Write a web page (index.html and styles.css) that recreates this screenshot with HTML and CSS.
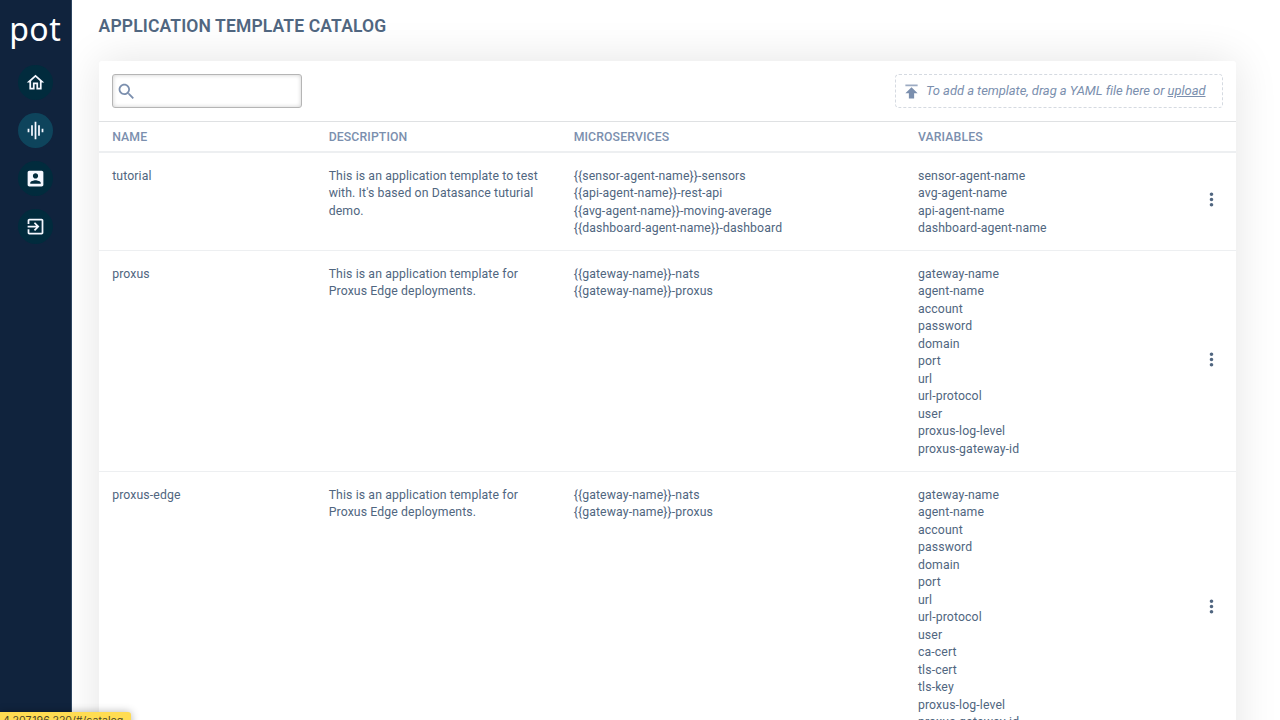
FILE: index.html
```html
<!DOCTYPE html>
<html lang="en">
<head>
<meta charset="utf-8">
<title>Application Template Catalog</title>
<link rel="stylesheet" href="styles.css">
</head>
<body>
<div class="app">
  <nav class="sidebar">
    <div class="logo">pot</div>
    <a class="nav-item"><svg viewBox="0 0 24 24"><path d="M12 5.69l5 4.5V18h-2v-6H9v6H7v-7.81l5-4.5M12 3L2 12h3v8h6v-6h2v6h6v-8h3L12 3z"/></svg></a>
    <a class="nav-item active"><svg viewBox="0 0 24 24"><path d="M7 18h2V6H7v12zm4 4h2V2h-2v20zm-8-8h2v-4H3v4zm12 4h2V6h-2v12zm4-8v4h2v-4h-2z"/></svg></a>
    <a class="nav-item"><svg viewBox="0 0 24 24"><path d="M3 5v14c0 1.1.89 2 2 2h14c1.1 0 2-.9 2-2V5c0-1.100-.9-2-2-2H5c-1.110 0-2 .9-2 2zm12 4c0 1.660-1.340 3-3 3s-3-1.340-3-3 1.340-3 3-3 3 1.340 3 3zm-9 8c0-2 4-3.100 6-3.100s6 1.100 6 3.100v1H6v-1z"/></svg></a>
    <a class="nav-item"><svg viewBox="0 0 24 24"><path d="M10.090 15.590L11.500 17l5-5-5-5-1.410 1.410L12.670 11H3v2h9.670l-2.580 2.590zM19 3H5c-1.110 0-2 .9-2 2v4h2V5h14v14H5v-4H3v4c0 1.100.89 2 2 2h14c1.100 0 2-.9 2-2V5c0-1.100-.9-2-2-2z"/></svg></a>
  </nav>
  <main class="content">
    <h1 class="title">APPLICATION TEMPLATE CATALOG</h1>
    <section class="card">
      <div class="toolbar">
        <label class="search"><svg viewBox="0 0 24 24"><path d="M15.500 14h-.79l-.28-.27C15.410 12.590 16 11.110 16 9.500 16 5.910 13.090 3 9.500 3S3 5.910 3 9.500 5.910 16 9.500 16c1.610 0 3.090-.59 4.230-1.570l.27.28v.79l5 4.990L20.490 19l-4.990-5zm-6 0C7.010 14 5 11.990 5 9.500S7.010 5 9.500 5 14 7.010 14 9.500 11.990 14 9.500 14z"/></svg></label>
        <div class="dropzone"><svg viewBox="0 0 24 24"><path opacity=".75" d="M5 4h14v2H5z"/><path d="M5 14h4v6h6v-6h4l-7-7z"/></svg><span>To add a template, drag a YAML file here or <u>upload</u></span></div>
      </div>
      <div class="row head"><div>NAME</div><div>DESCRIPTION</div><div>MICROSERVICES</div><div>VARIABLES</div></div>
      <div class="row">
        <div>tutorial</div>
        <div>This is an application template to test<br>with. It's based on Datasance tuturial<br>demo.</div>
        <div>{{sensor-agent-name}}-sensors<br>{{api-agent-name}}-rest-api<br>{{avg-agent-name}}-moving-average<br>{{dashboard-agent-name}}-dashboard</div>
        <div>sensor-agent-name<br>avg-agent-name<br>api-agent-name<br>dashboard-agent-name</div>
        <svg class="more" viewBox="0 0 24 24"><path d="M12 8c1.100 0 2-.9 2-2s-.9-2-2-2-2 .9-2 2 .9 2 2 2zm0 2c-1.100 0-2 .9-2 2s.9 2 2 2 2-.9 2-2-.9-2-2-2zm0 6c-1.100 0-2 .9-2 2s.9 2 2 2 2-.9 2-2-.9-2-2-2z"/></svg>
      </div>
      <div class="row">
        <div>proxus</div>
        <div>This is an application template for<br>Proxus Edge deployments.</div>
        <div>{{gateway-name}}-nats<br>{{gateway-name}}-proxus</div>
        <div>gateway-name<br>agent-name<br>account<br>password<br>domain<br>port<br>url<br>url-protocol<br>user<br>proxus-log-level<br>proxus-gateway-id</div>
        <svg class="more" viewBox="0 0 24 24"><path d="M12 8c1.100 0 2-.9 2-2s-.9-2-2-2-2 .9-2 2 .9 2 2 2zm0 2c-1.100 0-2 .9-2 2s.9 2 2 2 2-.9 2-2-.9-2-2-2zm0 6c-1.100 0-2 .9-2 2s.9 2 2 2 2-.9 2-2-.9-2-2-2z"/></svg>
      </div>
      <div class="row">
        <div>proxus-edge</div>
        <div>This is an application template for<br>Proxus Edge deployments.</div>
        <div>{{gateway-name}}-nats<br>{{gateway-name}}-proxus</div>
        <div>gateway-name<br>agent-name<br>account<br>password<br>domain<br>port<br>url<br>url-protocol<br>user<br>ca-cert<br>tls-cert<br>tls-key<br>proxus-log-level<br>proxus-gateway-id</div>
        <svg class="more" viewBox="0 0 24 24"><path d="M12 8c1.100 0 2-.9 2-2s-.9-2-2-2-2 .9-2 2 .9 2 2 2zm0 2c-1.100 0-2 .9-2 2s.9 2 2 2 2-.9 2-2-.9-2-2-2zm0 6c-1.100 0-2 .9-2 2s.9 2 2 2 2-.9 2-2-.9-2-2-2z"/></svg>
      </div>
    </section>
  </main>
  <div class="link-status">4.207.196.220/#/catalog</div>
</div>
</body>
</html>
```
FILE: styles.css
```css
* { box-sizing: border-box; }
body { margin: 0; background: #fff; font-family: Roboto, sans-serif; }
svg { display: block; fill: currentColor; flex: none; }
.app { position: relative; display: flex; width: 1280px; height: 720px; overflow: hidden; }
.sidebar { width: 72.400px; flex: none; background: #10233d; border-right: 1px solid #2e4661; display: flex; flex-direction: column; align-items: center; padding-right: 1px; z-index: 1; }
.logo { height: 65px; font: 32px/58px "Noto Sans", sans-serif; letter-spacing: .5px; color: #fff; }
.nav-item { width: 35px; height: 35px; margin-bottom: 13px; border-radius: 50%; background: #012b3d; color: #f5f8ff; display: flex; align-items: center; justify-content: center; }
.nav-item.active { background: #0e445c; }
.nav-item svg { width: 21px; height: 21px; }
.content { flex: 1; padding: 0 43.600px 0 26.200px; }
.title { margin: 0; height: 61px; font-size: 17.500px; line-height: 52px; font-weight: 600; letter-spacing: .14px; color: #506680; white-space: nowrap; }
.card { height: 1000px; margin-right: .4px; background: #fff; border-radius: 3px 3px 0 0; box-shadow: 0 0 44px rgba(0,0,0,.11); }
.toolbar { height: 61px; padding: 0 13px; display: flex; align-items: center; justify-content: space-between; border-bottom: 1px solid #dfe1e3; }
.search { width: 190px; height: 34px; border: 1px solid #b5b5b5; border-radius: 3px; box-shadow: inset 0 0 4px rgba(0,0,0,.2); display: flex; align-items: center; padding-left: 3px; color: #7b8fae; }
.search svg { width: 21px; height: 21px; }
.dropzone { width: 328px; height: 34px; border: 1px dashed #d5dae1; border-radius: 4px; display: flex; align-items: center; padding-left: 5px; color: #7b8fae; font-size: 13px; font-style: italic; letter-spacing: -.06px; white-space: nowrap; }
.dropzone svg { width: 21px; height: 21px; margin-right: 4px; }
.dropzone span { padding-bottom: 1px; }
.row { display: grid; grid-template-columns: 216.500px 245px 344.300px 283px 21px; padding: 14.600px 0 12.700px 13.600px; border-bottom: 1px solid #edeff1; font-size: 12.250px; line-height: 17.500px; letter-spacing: .12px; color: #506680; white-space: nowrap; }
.row.head { height: 31px; padding-top: 7px; padding-bottom: 0; border-bottom: 2px solid #edeff1; font-weight: 500; color: #7b8fae; }
.more { width: 21px; height: 21px; align-self: center; margin-bottom: 6px; }
.link-status { position: absolute; left: 0; top: 712px; z-index: 2; width: 131px; height: 20px; padding-left: 3px; border-radius: 0 3px 0 0; background: #ffdc52; box-shadow: 0 0 8px rgba(0,0,0,.3); color: #4c4528; font: 10.600px/18px Inter, sans-serif; font-feature-settings: "calt" 0; white-space: nowrap; }
```
